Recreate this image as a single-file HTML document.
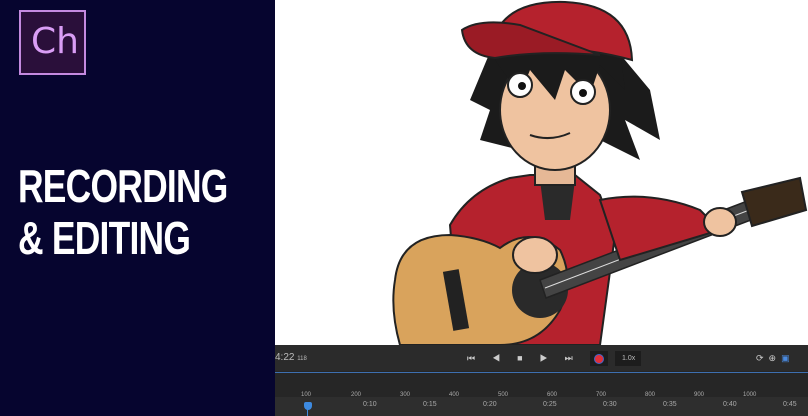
<!DOCTYPE html>
<html><head><style>
body{margin:0;width:808px;height:416px;overflow:hidden;background:#fff;font-family:"Liberation Sans",sans-serif;position:relative}
#left{position:absolute;left:0;top:0;width:275px;height:416px;background:#06052f}
#logo{position:absolute;left:19px;top:10px;width:67px;height:65px;border:2px solid #c48ae0;background:#2a0f3a;box-sizing:border-box}
#logo span{position:absolute;left:10px;top:9px;color:#d99df5;font-size:36px;font-family:"DejaVu Sans",sans-serif}
#title{position:absolute;left:18px;top:160px;color:#fff;font-family:"Liberation Sans Narrow","Liberation Sans",sans-serif;font-weight:bold;font-size:46px;line-height:52px;letter-spacing:-1px;transform:scaleX(.77);transform-origin:left}
#tl{position:absolute;left:275px;top:345px;width:533px;height:71px;background:#262626}
.t{position:absolute;color:#aaa;font-size:7px}
</style></head><body>
<svg style="position:absolute;left:275px;top:0" width="533" height="345" viewBox="275 0 533 345">
<rect x="275" y="0" width="533" height="345" fill="#fff"/>
<path d="M450 225 Q470 190 510 178 L530 175 L575 175 L600 195 L615 235 L600 345 L460 345 Z" fill="#b5222d" stroke="#222" stroke-width="2"/>
<path d="M540 180 L575 180 L570 220 L545 220 Z" fill="#2a2a2a"/>
<rect x="535" y="150" width="40" height="35" fill="#e6b896" stroke="#222" stroke-width="2"/>
<path d="M470 100 L495 40 L600 30 L650 90 L660 140 L625 120 L640 160 L600 140 L520 150 L480 140 L490 110 Z" fill="#1b1b1b"/>
<ellipse cx="555" cy="110" rx="55" ry="60" fill="#efc3a0" stroke="#222" stroke-width="2"/>
<path d="M495 60 L520 95 L530 70 L555 100 L565 70 L590 95 L600 65 L625 90 L620 50 L500 50 Z" fill="#1b1b1b"/>
<circle cx="520" cy="85" r="12" fill="#fff" stroke="#222" stroke-width="2"/><circle cx="522" cy="86" r="4" fill="#111"/>
<circle cx="583" cy="92" r="12" fill="#fff" stroke="#222" stroke-width="2"/><circle cx="583" cy="93" r="4" fill="#111"/>
<path d="M530 135 Q550 142 570 133" stroke="#222" stroke-width="2" fill="none"/>
<path d="M490 55 Q495 0 565 2 Q630 5 632 60 Q560 40 490 55 Z" fill="#b5222d" stroke="#222" stroke-width="2"/>
<path d="M462 30 Q480 18 520 25 L600 55 Q540 50 495 58 Q465 55 462 30 Z" fill="#9a1b25" stroke="#222" stroke-width="2"/>
<path d="M395 280 Q400 235 450 235 Q480 237 500 248 Q530 225 560 250 Q575 280 560 310 Q540 345 500 345 L400 345 Q390 310 395 280 Z" fill="#d9a35c" stroke="#222" stroke-width="2"/>
<circle cx="540" cy="290" r="28" fill="#2a2a2a"/>
<rect x="448" y="270" width="16" height="60" fill="#222" transform="rotate(-10 456 300)"/>
<path d="M540 280 L750 200 L756 218 L546 298 Z" fill="#444" stroke="#222" stroke-width="1.5"/>
<path d="M545 288 L752 209" stroke="#ddd" stroke-width="1"/>
<path d="M742 192 L800 178 L806 210 L752 226 Z" fill="#3a2a1a" stroke="#222" stroke-width="2"/>
<ellipse cx="535" cy="255" rx="22" ry="18" fill="#efc3a0" stroke="#222" stroke-width="2"/>
<path d="M600 200 Q650 190 700 210 L720 230 L620 260 Z" fill="#b5222d" stroke="#222" stroke-width="2"/>
<ellipse cx="720" cy="222" rx="16" ry="14" fill="#efc3a0" stroke="#222" stroke-width="2"/>
</svg>
<div id="left"><div id="logo"><span>Ch</span></div><div id="title">RECORDING<br>&amp; EDITING</div></div>
<div id="tl">
<div style="position:absolute;left:0;top:0;width:533px;height:26px;background:#2b2b2b"></div>
<div style="position:absolute;left:0;top:27px;width:533px;height:1px;background:#3d6fb0"></div>
<div style="position:absolute;left:0;top:52px;width:533px;height:19px;background:#2e2e2e"></div>
<div class="t" style="left:0;top:7px;font-size:10px;color:#bbb">4:22 <span style="font-size:6px">118</span></div>
<div class="t" style="left:192px;top:8px;font-size:9px;color:#ccc;letter-spacing:17px">⏮◀■▶⏭</div>
<div style="position:absolute;left:315px;top:6px;width:18px;height:15px;background:#1d1d1d"></div>
<div style="position:absolute;left:320px;top:10px;width:8px;height:8px;border-radius:50%;background:#e0303a;box-shadow:0 0 0 1px #4466cc"></div>
<div style="position:absolute;left:340px;top:6px;width:26px;height:15px;background:#1d1d1d"></div>
<div class="t" style="left:347px;top:10px;color:#bbb">1.0x</div>
<div class="t" style="left:481px;top:8px;font-size:9px;color:#ccc">⟳ &nbsp;⊕ &nbsp;<span style="color:#4a8adf">▣</span></div>
<div class="t" style="left:26px;top:47px;font-size:6px">100</div>
<div class="t" style="left:76px;top:47px;font-size:6px">200</div>
<div class="t" style="left:125px;top:47px;font-size:6px">300</div>
<div class="t" style="left:174px;top:47px;font-size:6px">400</div>
<div class="t" style="left:223px;top:47px;font-size:6px">500</div>
<div class="t" style="left:272px;top:47px;font-size:6px">600</div>
<div class="t" style="left:321px;top:47px;font-size:6px">700</div>
<div class="t" style="left:370px;top:47px;font-size:6px">800</div>
<div class="t" style="left:419px;top:47px;font-size:6px">900</div>
<div class="t" style="left:468px;top:47px;font-size:6px">1000</div>
<div class="t" style="left:88px;top:56px">0:10</div><div class="t" style="left:148px;top:56px">0:15</div>
<div class="t" style="left:208px;top:56px">0:20</div><div class="t" style="left:268px;top:56px">0:25</div>
<div class="t" style="left:328px;top:56px">0:30</div><div class="t" style="left:388px;top:56px">0:35</div>
<div class="t" style="left:448px;top:56px">0:40</div><div class="t" style="left:508px;top:56px">0:45</div>
<div style="position:absolute;left:29px;top:57px;width:8px;height:8px;background:#3d8ae0;border-radius:2px 2px 50% 50%"></div>
<div style="position:absolute;left:32px;top:62px;width:1px;height:9px;background:#3d8ae0"></div>
</div>
</body></html>
